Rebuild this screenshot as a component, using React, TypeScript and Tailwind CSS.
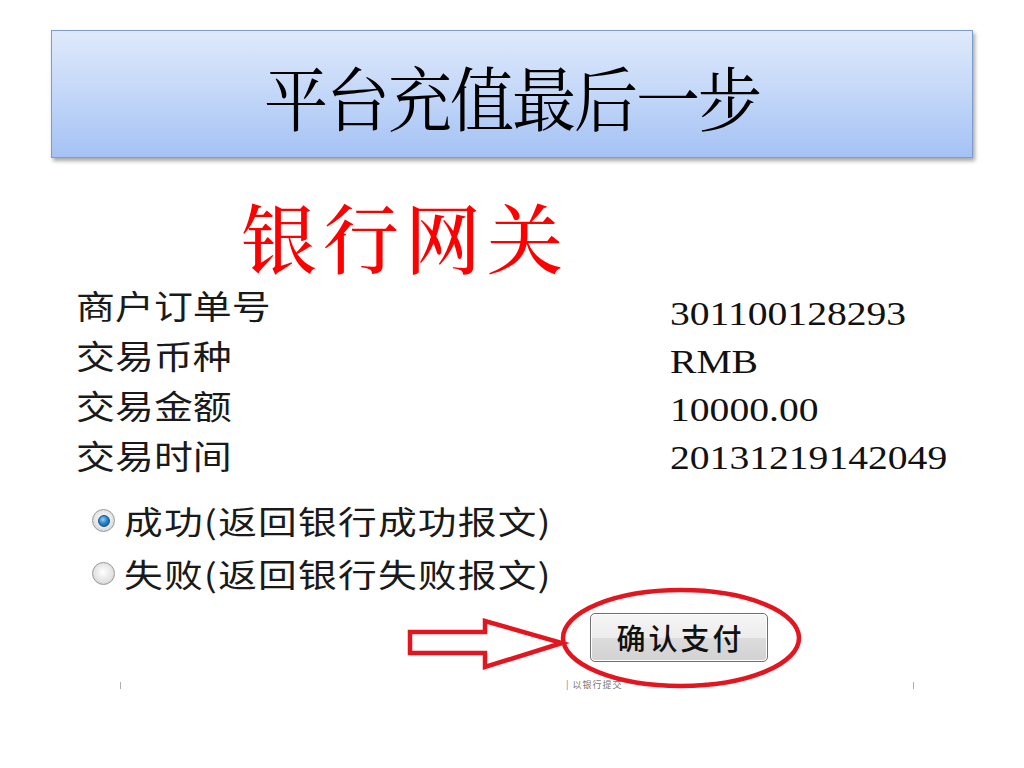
import React from "react";

const CJK = '"Noto Sans CJK SC", "Noto Sans", sans-serif';
const SERIF_CJK = '"Noto Serif CJK SC", "Liberation Serif", "Noto Sans CJK SC", serif';
const TIMES = '"Liberation Serif", "Times New Roman", serif';

function Radio({ checked }: { checked: boolean }) {
  return (
    <div className="w-[23px] h-[23px] rounded-full border border-[#9a9a9a] bg-[radial-gradient(circle_at_50%_45%,#ffffff_0%,#e6e6e6_55%,#bdbdbd_100%)] flex items-center justify-center shrink-0">
      {checked ? (
        <div className="w-[12px] h-[12px] rounded-full border border-[#1d4f80] bg-[radial-gradient(circle_at_40%_35%,#8fd2fb_0%,#2a86cc_45%,#0b4a86_100%)]" />
      ) : (
        <div className="w-[12px] h-[12px] rounded-full bg-[radial-gradient(circle_at_40%_35%,#ffffff_0%,#ececec_60%,#d4d4d4_100%)]" />
      )}
    </div>
  );
}

export default function App() {
  const labels = ["商户订单号", "交易币种", "交易金额", "交易时间"];
  const values = ["301100128293", "RMB", "10000.00", "20131219142049"];
  return (
    <div className="relative w-[1024px] h-[768px] bg-white overflow-hidden flex flex-col">
      {/* Title box */}
      <div className="mt-[30px] ml-[51px] w-[922px] h-[128px] border border-[#7d9ccc] bg-[linear-gradient(180deg,#dfe9fb_0%,#c3d7f8_50%,#a4c2f4_100%)] shadow-[2px_3px_4px_rgba(0,0,0,0.35)] flex items-center justify-center">
        <div
          className="text-[64px] leading-[64px] text-black tracking-[-2px] mt-[2px] scale-y-[1.1]"
          style={{ fontFamily: SERIF_CJK }}
        >
          平台充值最后一步
        </div>
      </div>

      {/* Red heading */}
      <div className="mt-[38px] pl-[241px] h-[80px] flex items-center">
        <span
          className="text-[76px] leading-[80px] tracking-[6px] text-[#ff0000] font-medium"
          style={{ fontFamily: SERIF_CJK }}
        >
          银行网关
        </span>
      </div>

      {/* Info rows */}
      <div className="flex items-start pl-[76px] mt-[4px]">
        <div className="w-[594px] flex flex-col">
          {labels.map((l) => (
            <div
              key={l}
              className="h-[50px] leading-[50px] text-[33px] text-[#1a1a1a] origin-left scale-x-[1.18]"
              style={{ fontFamily: CJK }}
            >
              {l}
            </div>
          ))}
        </div>
        <div className="flex flex-col mt-[10px]">
          {values.map((v) => (
            <div
              key={v}
              className="h-[48px] leading-[48px] text-[33px] text-[#111] origin-left scale-x-[1.2]"
              style={{ fontFamily: TIMES }}
            >
              {v}
            </div>
          ))}
        </div>
      </div>

      {/* Radio options */}
      <div className="flex flex-col pl-[92px] mt-[12px]">
        {[
          { checked: true, text: "成功(返回银行成功报文)" },
          { checked: false, text: "失败(返回银行失败报文)" },
        ].map((r) => (
          <div key={r.text} className="h-[53px] flex items-center gap-[9px]">
            <Radio checked={r.checked} />
            <div
              className="text-[32px] leading-[53px] tracking-[1px] text-[#1a1a1a] origin-left scale-x-[1.21]"
              style={{ fontFamily: CJK }}
            >
              {r.text}
            </div>
          </div>
        ))}
      </div>

      {/* Confirm button */}
      <div className="mt-[13px] pl-[590px]">
        <button
          className="w-[178px] h-[49px] rounded-[5px] border border-[#6f6f6f] bg-[linear-gradient(180deg,#f6f6f6_0%,#ececec_50%,#dcdcdc_51%,#d2d2d2_100%)] shadow-[inset_0_0_0_1px_#ffffff] flex items-center justify-center pl-[3px]"
        >
          <span
            className="text-[29px] leading-[29px] tracking-[3px] text-[#111] font-medium"
            style={{ fontFamily: CJK }}
          >
            确认支付
          </span>
        </button>
      </div>

      {/* Bottom artifacts */}
      <div className="relative mt-[18px] h-[12px]">
        <div className="absolute left-[120px] top-[2px] w-[1px] h-[7px] bg-[#b0b0b0]" />
        <div className="absolute left-[566px] top-[0px]">
          <span
            className="block text-[9px] leading-[10px] text-[#777] tracking-[1px]"
            style={{ fontFamily: CJK }}
          >
            | 以银行提交
          </span>
        </div>
        <div className="absolute left-[705px] top-[2px] w-[1px] h-[5px] bg-[#c0c0c0]" />
        <div className="absolute left-[913px] top-[2px] w-[1px] h-[7px] bg-[#b0b0b0]" />
      </div>

      {/* Annotation overlay: arrow and ellipse */}
      <svg
        className="absolute left-0 top-0 pointer-events-none"
        width="1024"
        height="768"
        viewBox="0 0 1024 768"
      >
        <polygon
          points="410,632 485,632 485,621 562,643 485,667 485,653 410,653"
          fill="#ffffff"
          stroke="#e3151f"
          strokeWidth="4.5"
          strokeLinejoin="miter"
        />
        <ellipse
          cx="681"
          cy="638"
          rx="118"
          ry="48"
          fill="none"
          stroke="#e3151f"
          strokeWidth="4.5"
        />
      </svg>
    </div>
  );
}
